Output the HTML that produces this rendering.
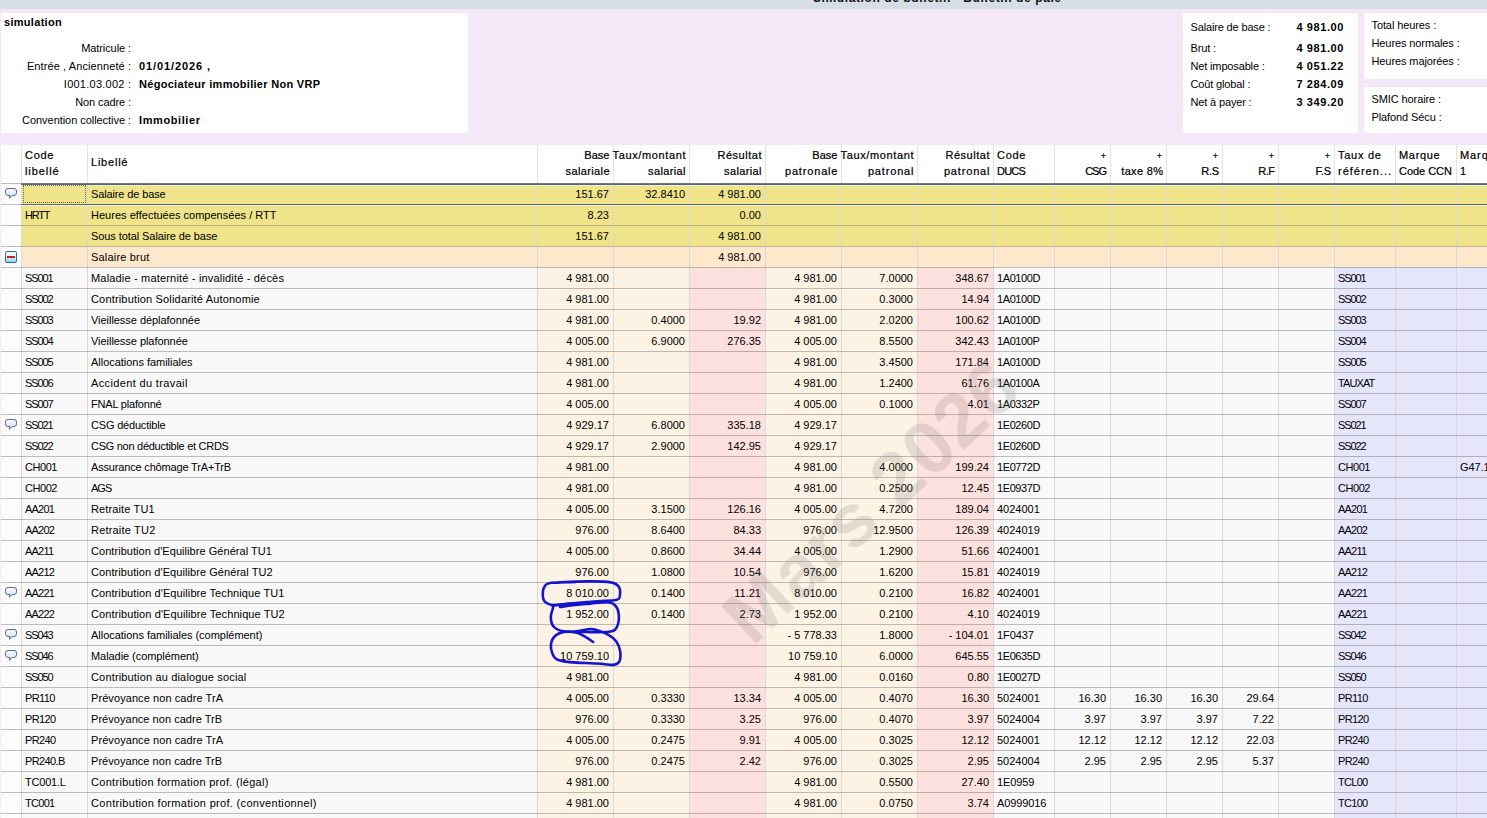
<!DOCTYPE html>
<html><head><meta charset="utf-8"><title>Simulation de bulletin</title>
<style>
html,body{margin:0;padding:0;}
body{width:1487px;height:818px;overflow:hidden;position:relative;background:#f3e7f8;font-family:"Liberation Sans",sans-serif;font-size:11px;color:#000;}
div{position:absolute;box-sizing:border-box;}
.t{white-space:nowrap;line-height:13px;height:13px;}
.r{text-align:right;}
.b{font-weight:bold;}
.bg{}
.tb{letter-spacing:0.15px;}
.hd{font-size:11px;color:#000;letter-spacing:0.5px;-webkit-text-stroke:0.22px #000;}
.cd{letter-spacing:-0.6px;}
</style></head><body>

<div style="left:0;top:0;width:1487px;height:9px;background:#d5dee4;overflow:hidden"><div class="t b" style="left:813px;top:-8px;font-size:12px;letter-spacing:0.6px;color:#111">Simulation de bulletin - Bulletin de paie</div></div>
<div style="left:1px;top:13px;width:467px;height:120px;background:#fff"></div>
<div class="t b" style="left:4.0px;top:15.7px;font-size:11px;letter-spacing:0.3px">simulation</div>
<div class="t  r" style="right:1356.1px;top:41.7px;letter-spacing:-0.10px">Matricule :</div>
<div class="t  r" style="right:1355.9px;top:59.7px;letter-spacing:0.10px">Entrée , Ancienneté :</div>
<div class="t b" style="left:139.0px;top:59.7px;letter-spacing:0.9px">01/01/2026 ,</div>
<div class="t  r" style="right:1355.8px;top:77.7px;letter-spacing:0.24px">I001.03.002 :</div>
<div class="t b" style="left:139.0px;top:77.7px;letter-spacing:0.3px">Négociateur immobilier Non VRP</div>
<div class="t  r" style="right:1356.1px;top:95.7px;letter-spacing:-0.10px">Non cadre :</div>
<div class="t  r" style="right:1356.0px;top:113.7px;letter-spacing:-0.05px">Convention collective :</div>
<div class="t b" style="left:139.0px;top:113.7px;letter-spacing:0.6px">Immobilier</div>
<div style="left:1183px;top:13px;width:175px;height:120px;background:#fff"></div>
<div class="t " style="left:1190.5px;top:20.7px;letter-spacing:-0.15px">Salaire de base :</div>
<div class="t b r" style="right:143.0px;top:20.7px;letter-spacing:0.6px">4 981.00</div>
<div class="t " style="left:1190.5px;top:41.7px;letter-spacing:-0.15px">Brut :</div>
<div class="t b r" style="right:143.0px;top:41.7px;letter-spacing:0.6px">4 981.00</div>
<div class="t " style="left:1190.5px;top:59.7px;letter-spacing:-0.15px">Net imposable :</div>
<div class="t b r" style="right:143.0px;top:59.7px;letter-spacing:0.6px">4 051.22</div>
<div class="t " style="left:1190.5px;top:77.7px;letter-spacing:-0.15px">Coût global :</div>
<div class="t b r" style="right:143.0px;top:77.7px;letter-spacing:0.6px">7 284.09</div>
<div class="t " style="left:1190.5px;top:95.7px;letter-spacing:-0.15px">Net à payer :</div>
<div class="t b r" style="right:143.0px;top:95.7px;letter-spacing:0.6px">3 349.20</div>
<div style="left:1364px;top:13px;width:123px;height:66px;background:#fff"></div>
<div style="left:1364px;top:87px;width:123px;height:46px;background:#fff"></div>
<div class="t " style="left:1371.5px;top:18.7px;letter-spacing:-0.1px">Total heures :</div>
<div class="t " style="left:1371.5px;top:36.7px;letter-spacing:-0.1px">Heures normales :</div>
<div class="t " style="left:1371.5px;top:54.7px;letter-spacing:-0.1px">Heures majorées :</div>
<div class="t " style="left:1371.5px;top:92.7px;letter-spacing:-0.1px">SMIC horaire :</div>
<div class="t " style="left:1371.5px;top:110.7px;letter-spacing:-0.1px">Plafond Sécu :</div>
<div style="left:1px;top:145px;width:1486px;height:38px;background:#fff"></div>
<div style="left:21px;top:145px;width:1px;height:38px;background:#e3e3e3"></div>
<div style="left:87px;top:145px;width:1px;height:38px;background:#e3e3e3"></div>
<div style="left:537px;top:145px;width:1px;height:38px;background:#e3e3e3"></div>
<div style="left:613px;top:145px;width:1px;height:38px;background:#e3e3e3"></div>
<div style="left:689px;top:145px;width:1px;height:38px;background:#e3e3e3"></div>
<div style="left:765px;top:145px;width:1px;height:38px;background:#e3e3e3"></div>
<div style="left:841px;top:145px;width:1px;height:38px;background:#e3e3e3"></div>
<div style="left:917px;top:145px;width:1px;height:38px;background:#e3e3e3"></div>
<div style="left:993px;top:145px;width:1px;height:38px;background:#e3e3e3"></div>
<div style="left:1054px;top:145px;width:1px;height:38px;background:#e3e3e3"></div>
<div style="left:1110px;top:145px;width:1px;height:38px;background:#e3e3e3"></div>
<div style="left:1166px;top:145px;width:1px;height:38px;background:#e3e3e3"></div>
<div style="left:1222px;top:145px;width:1px;height:38px;background:#e3e3e3"></div>
<div style="left:1278px;top:145px;width:1px;height:38px;background:#e3e3e3"></div>
<div style="left:1334px;top:145px;width:1px;height:38px;background:#e3e3e3"></div>
<div style="left:1395px;top:145px;width:1px;height:38px;background:#e3e3e3"></div>
<div style="left:1456px;top:145px;width:1px;height:38px;background:#e3e3e3"></div>
<div class="t hd" style="left:25.0px;top:148.7px;letter-spacing:0.73px">Code</div>
<div class="t hd" style="left:25.0px;top:164.7px;letter-spacing:0.93px">libellé</div>
<div class="t hd" style="left:91.0px;top:155.7px;letter-spacing:0.78px">Libellé</div>
<div class="t hd r" style="right:877.5px;top:148.7px;letter-spacing:0.04px">Base</div>
<div class="t hd r" style="right:877.1px;top:164.7px;letter-spacing:0.38px">salariale</div>
<div class="t hd r" style="right:800.9px;top:148.7px;letter-spacing:0.63px">Taux/montant</div>
<div class="t hd r" style="right:801.1px;top:164.7px;letter-spacing:0.38px">salarial</div>
<div class="t hd r" style="right:725.0px;top:148.7px;letter-spacing:0.52px">Résultat</div>
<div class="t hd r" style="right:725.1px;top:164.7px;letter-spacing:0.38px">salarial</div>
<div class="t hd r" style="right:649.5px;top:148.7px;letter-spacing:0.04px">Base</div>
<div class="t hd r" style="right:648.7px;top:164.7px;letter-spacing:0.83px">patronale</div>
<div class="t hd r" style="right:572.9px;top:148.7px;letter-spacing:0.63px">Taux/montant</div>
<div class="t hd r" style="right:572.7px;top:164.7px;letter-spacing:0.83px">patronal</div>
<div class="t hd r" style="right:497.0px;top:148.7px;letter-spacing:0.52px">Résultat</div>
<div class="t hd r" style="right:496.7px;top:164.7px;letter-spacing:0.83px">patronal</div>
<div class="t hd" style="left:997.0px;top:148.7px;letter-spacing:0.73px">Code</div>
<div class="t hd" style="left:997.0px;top:164.7px;letter-spacing:-0.80px">DUCS</div>
<div class="t hd r" style="right:381.0px;top:150.2px;font-size:9px;letter-spacing:0">+</div>
<div class="t hd r" style="right:381.0px;top:164.7px;letter-spacing:-1.00px">CSG</div>
<div class="t hd r" style="right:325.0px;top:150.2px;font-size:9px;letter-spacing:0">+</div>
<div class="t hd r" style="right:323.7px;top:164.7px;letter-spacing:0.33px">taxe 8%</div>
<div class="t hd r" style="right:269.0px;top:150.2px;font-size:9px;letter-spacing:0">+</div>
<div class="t hd r" style="right:268.3px;top:164.7px;letter-spacing:-0.32px">R.S</div>
<div class="t hd r" style="right:213.0px;top:150.2px;font-size:9px;letter-spacing:0">+</div>
<div class="t hd r" style="right:212.5px;top:164.7px;letter-spacing:-0.50px">R.F</div>
<div class="t hd r" style="right:157.0px;top:150.2px;font-size:9px;letter-spacing:0">+</div>
<div class="t hd r" style="right:156.2px;top:164.7px;letter-spacing:-0.20px">F.S</div>
<div class="t hd" style="left:1338.0px;top:148.7px;letter-spacing:0.74px">Taux de</div>
<div class="t hd" style="left:1338.0px;top:164.7px;letter-spacing:1.00px">référen...</div>
<div class="t hd" style="left:1399.0px;top:148.7px;letter-spacing:0.68px">Marque</div>
<div class="t hd" style="left:1399.0px;top:164.7px;letter-spacing:-0.04px">Code CCN</div>
<div class="t hd" style="left:1460.0px;top:148.7px;letter-spacing:0.90px">Marq</div>
<div class="t hd" style="left:1460.0px;top:164.7px;letter-spacing:0.00px">1</div>
<div style="left:1px;top:183px;width:20px;height:21px;background:#fcfcfc"></div>
<div style="left:21px;top:183px;width:66px;height:21px;background:#efe48a"></div>
<div style="left:87px;top:183px;width:450px;height:21px;background:#efe48a"></div>
<div style="left:537px;top:183px;width:76px;height:21px;background:#efe48a"></div>
<div style="left:613px;top:183px;width:76px;height:21px;background:#efe48a"></div>
<div style="left:689px;top:183px;width:76px;height:21px;background:#efe48a"></div>
<div style="left:765px;top:183px;width:76px;height:21px;background:#efe48a"></div>
<div style="left:841px;top:183px;width:76px;height:21px;background:#efe48a"></div>
<div style="left:917px;top:183px;width:76px;height:21px;background:#efe48a"></div>
<div style="left:993px;top:183px;width:61px;height:21px;background:#efe48a"></div>
<div style="left:1054px;top:183px;width:56px;height:21px;background:#efe48a"></div>
<div style="left:1110px;top:183px;width:56px;height:21px;background:#efe48a"></div>
<div style="left:1166px;top:183px;width:56px;height:21px;background:#efe48a"></div>
<div style="left:1222px;top:183px;width:56px;height:21px;background:#efe48a"></div>
<div style="left:1278px;top:183px;width:56px;height:21px;background:#efe48a"></div>
<div style="left:1334px;top:183px;width:61px;height:21px;background:#efe48a"></div>
<div style="left:1395px;top:183px;width:61px;height:21px;background:#efe48a"></div>
<div style="left:1456px;top:183px;width:61px;height:21px;background:#efe48a"></div>
<div class="t " style="left:91.0px;top:188.4px;letter-spacing:-0.13px">Salaire de base</div>
<div class="t  r" style="right:878.0px;top:188.4px;">151.67</div>
<div class="t  r" style="right:802.0px;top:188.4px;">32.8410</div>
<div class="t  r" style="right:726.0px;top:188.4px;">4 981.00</div>
<div style="left:1px;top:204px;width:20px;height:21px;background:#fcfcfc"></div>
<div style="left:21px;top:204px;width:66px;height:21px;background:#efe48a"></div>
<div style="left:87px;top:204px;width:450px;height:21px;background:#efe48a"></div>
<div style="left:537px;top:204px;width:76px;height:21px;background:#efe48a"></div>
<div style="left:613px;top:204px;width:76px;height:21px;background:#efe48a"></div>
<div style="left:689px;top:204px;width:76px;height:21px;background:#efe48a"></div>
<div style="left:765px;top:204px;width:76px;height:21px;background:#efe48a"></div>
<div style="left:841px;top:204px;width:76px;height:21px;background:#efe48a"></div>
<div style="left:917px;top:204px;width:76px;height:21px;background:#efe48a"></div>
<div style="left:993px;top:204px;width:61px;height:21px;background:#efe48a"></div>
<div style="left:1054px;top:204px;width:56px;height:21px;background:#efe48a"></div>
<div style="left:1110px;top:204px;width:56px;height:21px;background:#efe48a"></div>
<div style="left:1166px;top:204px;width:56px;height:21px;background:#efe48a"></div>
<div style="left:1222px;top:204px;width:56px;height:21px;background:#efe48a"></div>
<div style="left:1278px;top:204px;width:56px;height:21px;background:#efe48a"></div>
<div style="left:1334px;top:204px;width:61px;height:21px;background:#efe48a"></div>
<div style="left:1395px;top:204px;width:61px;height:21px;background:#efe48a"></div>
<div style="left:1456px;top:204px;width:61px;height:21px;background:#efe48a"></div>
<div class="t " style="left:25.0px;top:209.4px;letter-spacing:-1.20px">HRTT</div>
<div class="t " style="left:91.0px;top:209.4px;letter-spacing:0.02px">Heures effectuées compensées / RTT</div>
<div class="t  r" style="right:878.0px;top:209.4px;">8.23</div>
<div class="t  r" style="right:726.0px;top:209.4px;">0.00</div>
<div style="left:1px;top:225px;width:20px;height:21px;background:#fcfcfc"></div>
<div style="left:21px;top:225px;width:66px;height:21px;background:#efe48a"></div>
<div style="left:87px;top:225px;width:450px;height:21px;background:#efe48a"></div>
<div style="left:537px;top:225px;width:76px;height:21px;background:#efe48a"></div>
<div style="left:613px;top:225px;width:76px;height:21px;background:#efe48a"></div>
<div style="left:689px;top:225px;width:76px;height:21px;background:#efe48a"></div>
<div style="left:765px;top:225px;width:76px;height:21px;background:#efe48a"></div>
<div style="left:841px;top:225px;width:76px;height:21px;background:#efe48a"></div>
<div style="left:917px;top:225px;width:76px;height:21px;background:#efe48a"></div>
<div style="left:993px;top:225px;width:61px;height:21px;background:#efe48a"></div>
<div style="left:1054px;top:225px;width:56px;height:21px;background:#efe48a"></div>
<div style="left:1110px;top:225px;width:56px;height:21px;background:#efe48a"></div>
<div style="left:1166px;top:225px;width:56px;height:21px;background:#efe48a"></div>
<div style="left:1222px;top:225px;width:56px;height:21px;background:#efe48a"></div>
<div style="left:1278px;top:225px;width:56px;height:21px;background:#efe48a"></div>
<div style="left:1334px;top:225px;width:61px;height:21px;background:#efe48a"></div>
<div style="left:1395px;top:225px;width:61px;height:21px;background:#efe48a"></div>
<div style="left:1456px;top:225px;width:61px;height:21px;background:#efe48a"></div>
<div class="t " style="left:91.0px;top:230.4px;letter-spacing:-0.08px">Sous total Salaire de base</div>
<div class="t  r" style="right:878.0px;top:230.4px;">151.67</div>
<div class="t  r" style="right:726.0px;top:230.4px;">4 981.00</div>
<div style="left:1px;top:246px;width:20px;height:21px;background:#fcfcfc"></div>
<div style="left:21px;top:246px;width:66px;height:21px;background:#fde8cc"></div>
<div style="left:87px;top:246px;width:450px;height:21px;background:#fde8cc"></div>
<div style="left:537px;top:246px;width:76px;height:21px;background:#fde8cc"></div>
<div style="left:613px;top:246px;width:76px;height:21px;background:#fde8cc"></div>
<div style="left:689px;top:246px;width:76px;height:21px;background:#fde8cc"></div>
<div style="left:765px;top:246px;width:76px;height:21px;background:#fde8cc"></div>
<div style="left:841px;top:246px;width:76px;height:21px;background:#fde8cc"></div>
<div style="left:917px;top:246px;width:76px;height:21px;background:#fde8cc"></div>
<div style="left:993px;top:246px;width:61px;height:21px;background:#fde8cc"></div>
<div style="left:1054px;top:246px;width:56px;height:21px;background:#fde8cc"></div>
<div style="left:1110px;top:246px;width:56px;height:21px;background:#fde8cc"></div>
<div style="left:1166px;top:246px;width:56px;height:21px;background:#fde8cc"></div>
<div style="left:1222px;top:246px;width:56px;height:21px;background:#fde8cc"></div>
<div style="left:1278px;top:246px;width:56px;height:21px;background:#fde8cc"></div>
<div style="left:1334px;top:246px;width:61px;height:21px;background:#fde8cc"></div>
<div style="left:1395px;top:246px;width:61px;height:21px;background:#fde8cc"></div>
<div style="left:1456px;top:246px;width:61px;height:21px;background:#fde8cc"></div>
<div class="t " style="left:91.0px;top:251.4px;letter-spacing:0.19px">Salaire brut</div>
<div class="t  r" style="right:726.0px;top:251.4px;">4 981.00</div>
<div style="left:1px;top:267px;width:20px;height:21px;background:#fcfcfc"></div>
<div style="left:21px;top:267px;width:66px;height:21px;background:#f8f8f8"></div>
<div style="left:87px;top:267px;width:450px;height:21px;background:#f8f8f8"></div>
<div style="left:537px;top:267px;width:76px;height:21px;background:#fdf3e4"></div>
<div style="left:613px;top:267px;width:76px;height:21px;background:#fdf3e4"></div>
<div style="left:689px;top:267px;width:76px;height:21px;background:#fde1df"></div>
<div style="left:765px;top:267px;width:76px;height:21px;background:#fdf3e4"></div>
<div style="left:841px;top:267px;width:76px;height:21px;background:#fdf3e4"></div>
<div style="left:917px;top:267px;width:76px;height:21px;background:#fde1df"></div>
<div style="left:993px;top:267px;width:61px;height:21px;background:#f8f8f8"></div>
<div style="left:1054px;top:267px;width:56px;height:21px;background:#f8f8f8"></div>
<div style="left:1110px;top:267px;width:56px;height:21px;background:#f8f8f8"></div>
<div style="left:1166px;top:267px;width:56px;height:21px;background:#f8f8f8"></div>
<div style="left:1222px;top:267px;width:56px;height:21px;background:#f8f8f8"></div>
<div style="left:1278px;top:267px;width:56px;height:21px;background:#f8f8f8"></div>
<div style="left:1334px;top:267px;width:61px;height:21px;background:#e6e6fa"></div>
<div style="left:1395px;top:267px;width:61px;height:21px;background:#e6e6fa"></div>
<div style="left:1456px;top:267px;width:61px;height:21px;background:#e6e6fa"></div>
<div class="t " style="left:25.0px;top:272.4px;letter-spacing:-1.10px">SS001</div>
<div class="t " style="left:91.0px;top:272.4px;letter-spacing:0.18px">Maladie - maternité - invalidité - décès</div>
<div class="t  r" style="right:878.0px;top:272.4px;">4 981.00</div>
<div class="t  r" style="right:650.0px;top:272.4px;">4 981.00</div>
<div class="t  r" style="right:574.0px;top:272.4px;">7.0000</div>
<div class="t  r" style="right:498.0px;top:272.4px;">348.67</div>
<div class="t " style="left:997.0px;top:272.4px;letter-spacing:-0.40px">1A0100D</div>
<div class="t " style="left:1338.0px;top:272.4px;letter-spacing:-1.10px">SS001</div>
<div style="left:1px;top:288px;width:20px;height:21px;background:#fcfcfc"></div>
<div style="left:21px;top:288px;width:66px;height:21px;background:#f8f8f8"></div>
<div style="left:87px;top:288px;width:450px;height:21px;background:#f8f8f8"></div>
<div style="left:537px;top:288px;width:76px;height:21px;background:#fdf3e4"></div>
<div style="left:613px;top:288px;width:76px;height:21px;background:#fdf3e4"></div>
<div style="left:689px;top:288px;width:76px;height:21px;background:#fde1df"></div>
<div style="left:765px;top:288px;width:76px;height:21px;background:#fdf3e4"></div>
<div style="left:841px;top:288px;width:76px;height:21px;background:#fdf3e4"></div>
<div style="left:917px;top:288px;width:76px;height:21px;background:#fde1df"></div>
<div style="left:993px;top:288px;width:61px;height:21px;background:#f8f8f8"></div>
<div style="left:1054px;top:288px;width:56px;height:21px;background:#f8f8f8"></div>
<div style="left:1110px;top:288px;width:56px;height:21px;background:#f8f8f8"></div>
<div style="left:1166px;top:288px;width:56px;height:21px;background:#f8f8f8"></div>
<div style="left:1222px;top:288px;width:56px;height:21px;background:#f8f8f8"></div>
<div style="left:1278px;top:288px;width:56px;height:21px;background:#f8f8f8"></div>
<div style="left:1334px;top:288px;width:61px;height:21px;background:#e6e6fa"></div>
<div style="left:1395px;top:288px;width:61px;height:21px;background:#e6e6fa"></div>
<div style="left:1456px;top:288px;width:61px;height:21px;background:#e6e6fa"></div>
<div class="t " style="left:25.0px;top:293.4px;letter-spacing:-1.10px">SS002</div>
<div class="t " style="left:91.0px;top:293.4px;letter-spacing:0.17px">Contribution Solidarité Autonomie</div>
<div class="t  r" style="right:878.0px;top:293.4px;">4 981.00</div>
<div class="t  r" style="right:650.0px;top:293.4px;">4 981.00</div>
<div class="t  r" style="right:574.0px;top:293.4px;">0.3000</div>
<div class="t  r" style="right:498.0px;top:293.4px;">14.94</div>
<div class="t " style="left:997.0px;top:293.4px;letter-spacing:-0.40px">1A0100D</div>
<div class="t " style="left:1338.0px;top:293.4px;letter-spacing:-1.10px">SS002</div>
<div style="left:1px;top:309px;width:20px;height:21px;background:#fcfcfc"></div>
<div style="left:21px;top:309px;width:66px;height:21px;background:#f8f8f8"></div>
<div style="left:87px;top:309px;width:450px;height:21px;background:#f8f8f8"></div>
<div style="left:537px;top:309px;width:76px;height:21px;background:#fdf3e4"></div>
<div style="left:613px;top:309px;width:76px;height:21px;background:#fdf3e4"></div>
<div style="left:689px;top:309px;width:76px;height:21px;background:#fde1df"></div>
<div style="left:765px;top:309px;width:76px;height:21px;background:#fdf3e4"></div>
<div style="left:841px;top:309px;width:76px;height:21px;background:#fdf3e4"></div>
<div style="left:917px;top:309px;width:76px;height:21px;background:#fde1df"></div>
<div style="left:993px;top:309px;width:61px;height:21px;background:#f8f8f8"></div>
<div style="left:1054px;top:309px;width:56px;height:21px;background:#f8f8f8"></div>
<div style="left:1110px;top:309px;width:56px;height:21px;background:#f8f8f8"></div>
<div style="left:1166px;top:309px;width:56px;height:21px;background:#f8f8f8"></div>
<div style="left:1222px;top:309px;width:56px;height:21px;background:#f8f8f8"></div>
<div style="left:1278px;top:309px;width:56px;height:21px;background:#f8f8f8"></div>
<div style="left:1334px;top:309px;width:61px;height:21px;background:#e6e6fa"></div>
<div style="left:1395px;top:309px;width:61px;height:21px;background:#e6e6fa"></div>
<div style="left:1456px;top:309px;width:61px;height:21px;background:#e6e6fa"></div>
<div class="t " style="left:25.0px;top:314.4px;letter-spacing:-1.10px">SS003</div>
<div class="t " style="left:91.0px;top:314.4px;letter-spacing:-0.04px">Vieillesse déplafonnée</div>
<div class="t  r" style="right:878.0px;top:314.4px;">4 981.00</div>
<div class="t  r" style="right:802.0px;top:314.4px;">0.4000</div>
<div class="t  r" style="right:726.0px;top:314.4px;">19.92</div>
<div class="t  r" style="right:650.0px;top:314.4px;">4 981.00</div>
<div class="t  r" style="right:574.0px;top:314.4px;">2.0200</div>
<div class="t  r" style="right:498.0px;top:314.4px;">100.62</div>
<div class="t " style="left:997.0px;top:314.4px;letter-spacing:-0.40px">1A0100D</div>
<div class="t " style="left:1338.0px;top:314.4px;letter-spacing:-1.10px">SS003</div>
<div style="left:1px;top:330px;width:20px;height:21px;background:#fcfcfc"></div>
<div style="left:21px;top:330px;width:66px;height:21px;background:#f8f8f8"></div>
<div style="left:87px;top:330px;width:450px;height:21px;background:#f8f8f8"></div>
<div style="left:537px;top:330px;width:76px;height:21px;background:#fdf3e4"></div>
<div style="left:613px;top:330px;width:76px;height:21px;background:#fdf3e4"></div>
<div style="left:689px;top:330px;width:76px;height:21px;background:#fde1df"></div>
<div style="left:765px;top:330px;width:76px;height:21px;background:#fdf3e4"></div>
<div style="left:841px;top:330px;width:76px;height:21px;background:#fdf3e4"></div>
<div style="left:917px;top:330px;width:76px;height:21px;background:#fde1df"></div>
<div style="left:993px;top:330px;width:61px;height:21px;background:#f8f8f8"></div>
<div style="left:1054px;top:330px;width:56px;height:21px;background:#f8f8f8"></div>
<div style="left:1110px;top:330px;width:56px;height:21px;background:#f8f8f8"></div>
<div style="left:1166px;top:330px;width:56px;height:21px;background:#f8f8f8"></div>
<div style="left:1222px;top:330px;width:56px;height:21px;background:#f8f8f8"></div>
<div style="left:1278px;top:330px;width:56px;height:21px;background:#f8f8f8"></div>
<div style="left:1334px;top:330px;width:61px;height:21px;background:#e6e6fa"></div>
<div style="left:1395px;top:330px;width:61px;height:21px;background:#e6e6fa"></div>
<div style="left:1456px;top:330px;width:61px;height:21px;background:#e6e6fa"></div>
<div class="t " style="left:25.0px;top:335.4px;letter-spacing:-1.10px">SS004</div>
<div class="t " style="left:91.0px;top:335.4px;letter-spacing:-0.04px">Vieillesse plafonnée</div>
<div class="t  r" style="right:878.0px;top:335.4px;">4 005.00</div>
<div class="t  r" style="right:802.0px;top:335.4px;">6.9000</div>
<div class="t  r" style="right:726.0px;top:335.4px;">276.35</div>
<div class="t  r" style="right:650.0px;top:335.4px;">4 005.00</div>
<div class="t  r" style="right:574.0px;top:335.4px;">8.5500</div>
<div class="t  r" style="right:498.0px;top:335.4px;">342.43</div>
<div class="t " style="left:997.0px;top:335.4px;letter-spacing:-0.40px">1A0100P</div>
<div class="t " style="left:1338.0px;top:335.4px;letter-spacing:-1.10px">SS004</div>
<div style="left:1px;top:351px;width:20px;height:21px;background:#fcfcfc"></div>
<div style="left:21px;top:351px;width:66px;height:21px;background:#f8f8f8"></div>
<div style="left:87px;top:351px;width:450px;height:21px;background:#f8f8f8"></div>
<div style="left:537px;top:351px;width:76px;height:21px;background:#fdf3e4"></div>
<div style="left:613px;top:351px;width:76px;height:21px;background:#fdf3e4"></div>
<div style="left:689px;top:351px;width:76px;height:21px;background:#fde1df"></div>
<div style="left:765px;top:351px;width:76px;height:21px;background:#fdf3e4"></div>
<div style="left:841px;top:351px;width:76px;height:21px;background:#fdf3e4"></div>
<div style="left:917px;top:351px;width:76px;height:21px;background:#fde1df"></div>
<div style="left:993px;top:351px;width:61px;height:21px;background:#f8f8f8"></div>
<div style="left:1054px;top:351px;width:56px;height:21px;background:#f8f8f8"></div>
<div style="left:1110px;top:351px;width:56px;height:21px;background:#f8f8f8"></div>
<div style="left:1166px;top:351px;width:56px;height:21px;background:#f8f8f8"></div>
<div style="left:1222px;top:351px;width:56px;height:21px;background:#f8f8f8"></div>
<div style="left:1278px;top:351px;width:56px;height:21px;background:#f8f8f8"></div>
<div style="left:1334px;top:351px;width:61px;height:21px;background:#e6e6fa"></div>
<div style="left:1395px;top:351px;width:61px;height:21px;background:#e6e6fa"></div>
<div style="left:1456px;top:351px;width:61px;height:21px;background:#e6e6fa"></div>
<div class="t " style="left:25.0px;top:356.4px;letter-spacing:-1.10px">SS005</div>
<div class="t " style="left:91.0px;top:356.4px;letter-spacing:-0.03px">Allocations familiales</div>
<div class="t  r" style="right:878.0px;top:356.4px;">4 981.00</div>
<div class="t  r" style="right:650.0px;top:356.4px;">4 981.00</div>
<div class="t  r" style="right:574.0px;top:356.4px;">3.4500</div>
<div class="t  r" style="right:498.0px;top:356.4px;">171.84</div>
<div class="t " style="left:997.0px;top:356.4px;letter-spacing:-0.40px">1A0100D</div>
<div class="t " style="left:1338.0px;top:356.4px;letter-spacing:-1.10px">SS005</div>
<div style="left:1px;top:372px;width:20px;height:21px;background:#fcfcfc"></div>
<div style="left:21px;top:372px;width:66px;height:21px;background:#f8f8f8"></div>
<div style="left:87px;top:372px;width:450px;height:21px;background:#f8f8f8"></div>
<div style="left:537px;top:372px;width:76px;height:21px;background:#fdf3e4"></div>
<div style="left:613px;top:372px;width:76px;height:21px;background:#fdf3e4"></div>
<div style="left:689px;top:372px;width:76px;height:21px;background:#fde1df"></div>
<div style="left:765px;top:372px;width:76px;height:21px;background:#fdf3e4"></div>
<div style="left:841px;top:372px;width:76px;height:21px;background:#fdf3e4"></div>
<div style="left:917px;top:372px;width:76px;height:21px;background:#fde1df"></div>
<div style="left:993px;top:372px;width:61px;height:21px;background:#f8f8f8"></div>
<div style="left:1054px;top:372px;width:56px;height:21px;background:#f8f8f8"></div>
<div style="left:1110px;top:372px;width:56px;height:21px;background:#f8f8f8"></div>
<div style="left:1166px;top:372px;width:56px;height:21px;background:#f8f8f8"></div>
<div style="left:1222px;top:372px;width:56px;height:21px;background:#f8f8f8"></div>
<div style="left:1278px;top:372px;width:56px;height:21px;background:#f8f8f8"></div>
<div style="left:1334px;top:372px;width:61px;height:21px;background:#e6e6fa"></div>
<div style="left:1395px;top:372px;width:61px;height:21px;background:#e6e6fa"></div>
<div style="left:1456px;top:372px;width:61px;height:21px;background:#e6e6fa"></div>
<div class="t " style="left:25.0px;top:377.4px;letter-spacing:-1.10px">SS006</div>
<div class="t " style="left:91.0px;top:377.4px;letter-spacing:0.36px">Accident du travail</div>
<div class="t  r" style="right:878.0px;top:377.4px;">4 981.00</div>
<div class="t  r" style="right:650.0px;top:377.4px;">4 981.00</div>
<div class="t  r" style="right:574.0px;top:377.4px;">1.2400</div>
<div class="t  r" style="right:498.0px;top:377.4px;">61.76</div>
<div class="t " style="left:997.0px;top:377.4px;letter-spacing:-0.40px">1A0100A</div>
<div class="t " style="left:1338.0px;top:377.4px;letter-spacing:-0.90px">TAUXAT</div>
<div style="left:1px;top:393px;width:20px;height:21px;background:#fcfcfc"></div>
<div style="left:21px;top:393px;width:66px;height:21px;background:#f8f8f8"></div>
<div style="left:87px;top:393px;width:450px;height:21px;background:#f8f8f8"></div>
<div style="left:537px;top:393px;width:76px;height:21px;background:#fdf3e4"></div>
<div style="left:613px;top:393px;width:76px;height:21px;background:#fdf3e4"></div>
<div style="left:689px;top:393px;width:76px;height:21px;background:#fde1df"></div>
<div style="left:765px;top:393px;width:76px;height:21px;background:#fdf3e4"></div>
<div style="left:841px;top:393px;width:76px;height:21px;background:#fdf3e4"></div>
<div style="left:917px;top:393px;width:76px;height:21px;background:#fde1df"></div>
<div style="left:993px;top:393px;width:61px;height:21px;background:#f8f8f8"></div>
<div style="left:1054px;top:393px;width:56px;height:21px;background:#f8f8f8"></div>
<div style="left:1110px;top:393px;width:56px;height:21px;background:#f8f8f8"></div>
<div style="left:1166px;top:393px;width:56px;height:21px;background:#f8f8f8"></div>
<div style="left:1222px;top:393px;width:56px;height:21px;background:#f8f8f8"></div>
<div style="left:1278px;top:393px;width:56px;height:21px;background:#f8f8f8"></div>
<div style="left:1334px;top:393px;width:61px;height:21px;background:#e6e6fa"></div>
<div style="left:1395px;top:393px;width:61px;height:21px;background:#e6e6fa"></div>
<div style="left:1456px;top:393px;width:61px;height:21px;background:#e6e6fa"></div>
<div class="t " style="left:25.0px;top:398.4px;letter-spacing:-1.10px">SS007</div>
<div class="t " style="left:91.0px;top:398.4px;letter-spacing:-0.19px">FNAL plafonné</div>
<div class="t  r" style="right:878.0px;top:398.4px;">4 005.00</div>
<div class="t  r" style="right:650.0px;top:398.4px;">4 005.00</div>
<div class="t  r" style="right:574.0px;top:398.4px;">0.1000</div>
<div class="t  r" style="right:498.0px;top:398.4px;">4.01</div>
<div class="t " style="left:997.0px;top:398.4px;letter-spacing:-0.40px">1A0332P</div>
<div class="t " style="left:1338.0px;top:398.4px;letter-spacing:-1.10px">SS007</div>
<div style="left:1px;top:414px;width:20px;height:21px;background:#fcfcfc"></div>
<div style="left:21px;top:414px;width:66px;height:21px;background:#f8f8f8"></div>
<div style="left:87px;top:414px;width:450px;height:21px;background:#f8f8f8"></div>
<div style="left:537px;top:414px;width:76px;height:21px;background:#fdf3e4"></div>
<div style="left:613px;top:414px;width:76px;height:21px;background:#fdf3e4"></div>
<div style="left:689px;top:414px;width:76px;height:21px;background:#fde1df"></div>
<div style="left:765px;top:414px;width:76px;height:21px;background:#fdf3e4"></div>
<div style="left:841px;top:414px;width:76px;height:21px;background:#fdf3e4"></div>
<div style="left:917px;top:414px;width:76px;height:21px;background:#fde1df"></div>
<div style="left:993px;top:414px;width:61px;height:21px;background:#f8f8f8"></div>
<div style="left:1054px;top:414px;width:56px;height:21px;background:#f8f8f8"></div>
<div style="left:1110px;top:414px;width:56px;height:21px;background:#f8f8f8"></div>
<div style="left:1166px;top:414px;width:56px;height:21px;background:#f8f8f8"></div>
<div style="left:1222px;top:414px;width:56px;height:21px;background:#f8f8f8"></div>
<div style="left:1278px;top:414px;width:56px;height:21px;background:#f8f8f8"></div>
<div style="left:1334px;top:414px;width:61px;height:21px;background:#e6e6fa"></div>
<div style="left:1395px;top:414px;width:61px;height:21px;background:#e6e6fa"></div>
<div style="left:1456px;top:414px;width:61px;height:21px;background:#e6e6fa"></div>
<div class="t " style="left:25.0px;top:419.4px;letter-spacing:-1.10px">SS021</div>
<div class="t " style="left:91.0px;top:419.4px;letter-spacing:-0.19px">CSG déductible</div>
<div class="t  r" style="right:878.0px;top:419.4px;">4 929.17</div>
<div class="t  r" style="right:802.0px;top:419.4px;">6.8000</div>
<div class="t  r" style="right:726.0px;top:419.4px;">335.18</div>
<div class="t  r" style="right:650.0px;top:419.4px;">4 929.17</div>
<div class="t " style="left:997.0px;top:419.4px;letter-spacing:-0.40px">1E0260D</div>
<div class="t " style="left:1338.0px;top:419.4px;letter-spacing:-1.10px">SS021</div>
<div style="left:1px;top:435px;width:20px;height:21px;background:#fcfcfc"></div>
<div style="left:21px;top:435px;width:66px;height:21px;background:#f8f8f8"></div>
<div style="left:87px;top:435px;width:450px;height:21px;background:#f8f8f8"></div>
<div style="left:537px;top:435px;width:76px;height:21px;background:#fdf3e4"></div>
<div style="left:613px;top:435px;width:76px;height:21px;background:#fdf3e4"></div>
<div style="left:689px;top:435px;width:76px;height:21px;background:#fde1df"></div>
<div style="left:765px;top:435px;width:76px;height:21px;background:#fdf3e4"></div>
<div style="left:841px;top:435px;width:76px;height:21px;background:#fdf3e4"></div>
<div style="left:917px;top:435px;width:76px;height:21px;background:#fde1df"></div>
<div style="left:993px;top:435px;width:61px;height:21px;background:#f8f8f8"></div>
<div style="left:1054px;top:435px;width:56px;height:21px;background:#f8f8f8"></div>
<div style="left:1110px;top:435px;width:56px;height:21px;background:#f8f8f8"></div>
<div style="left:1166px;top:435px;width:56px;height:21px;background:#f8f8f8"></div>
<div style="left:1222px;top:435px;width:56px;height:21px;background:#f8f8f8"></div>
<div style="left:1278px;top:435px;width:56px;height:21px;background:#f8f8f8"></div>
<div style="left:1334px;top:435px;width:61px;height:21px;background:#e6e6fa"></div>
<div style="left:1395px;top:435px;width:61px;height:21px;background:#e6e6fa"></div>
<div style="left:1456px;top:435px;width:61px;height:21px;background:#e6e6fa"></div>
<div class="t " style="left:25.0px;top:440.4px;letter-spacing:-1.10px">SS022</div>
<div class="t " style="left:91.0px;top:440.4px;letter-spacing:-0.28px">CSG non déductible et CRDS</div>
<div class="t  r" style="right:878.0px;top:440.4px;">4 929.17</div>
<div class="t  r" style="right:802.0px;top:440.4px;">2.9000</div>
<div class="t  r" style="right:726.0px;top:440.4px;">142.95</div>
<div class="t  r" style="right:650.0px;top:440.4px;">4 929.17</div>
<div class="t " style="left:997.0px;top:440.4px;letter-spacing:-0.40px">1E0260D</div>
<div class="t " style="left:1338.0px;top:440.4px;letter-spacing:-1.10px">SS022</div>
<div style="left:1px;top:456px;width:20px;height:21px;background:#fcfcfc"></div>
<div style="left:21px;top:456px;width:66px;height:21px;background:#f8f8f8"></div>
<div style="left:87px;top:456px;width:450px;height:21px;background:#f8f8f8"></div>
<div style="left:537px;top:456px;width:76px;height:21px;background:#fdf3e4"></div>
<div style="left:613px;top:456px;width:76px;height:21px;background:#fdf3e4"></div>
<div style="left:689px;top:456px;width:76px;height:21px;background:#fde1df"></div>
<div style="left:765px;top:456px;width:76px;height:21px;background:#fdf3e4"></div>
<div style="left:841px;top:456px;width:76px;height:21px;background:#fdf3e4"></div>
<div style="left:917px;top:456px;width:76px;height:21px;background:#fde1df"></div>
<div style="left:993px;top:456px;width:61px;height:21px;background:#f8f8f8"></div>
<div style="left:1054px;top:456px;width:56px;height:21px;background:#f8f8f8"></div>
<div style="left:1110px;top:456px;width:56px;height:21px;background:#f8f8f8"></div>
<div style="left:1166px;top:456px;width:56px;height:21px;background:#f8f8f8"></div>
<div style="left:1222px;top:456px;width:56px;height:21px;background:#f8f8f8"></div>
<div style="left:1278px;top:456px;width:56px;height:21px;background:#f8f8f8"></div>
<div style="left:1334px;top:456px;width:61px;height:21px;background:#e6e6fa"></div>
<div style="left:1395px;top:456px;width:61px;height:21px;background:#e6e6fa"></div>
<div style="left:1456px;top:456px;width:61px;height:21px;background:#e6e6fa"></div>
<div class="t " style="left:25.0px;top:461.4px;letter-spacing:-0.45px">CH001</div>
<div class="t " style="left:91.0px;top:461.4px;letter-spacing:-0.17px">Assurance chômage TrA+TrB</div>
<div class="t  r" style="right:878.0px;top:461.4px;">4 981.00</div>
<div class="t  r" style="right:650.0px;top:461.4px;">4 981.00</div>
<div class="t  r" style="right:574.0px;top:461.4px;">4.0000</div>
<div class="t  r" style="right:498.0px;top:461.4px;">199.24</div>
<div class="t " style="left:997.0px;top:461.4px;letter-spacing:-0.40px">1E0772D</div>
<div class="t " style="left:1338.0px;top:461.4px;letter-spacing:-0.45px">CH001</div>
<div class="t " style="left:1460.0px;top:461.4px;letter-spacing:-0.10px">G47.1</div>
<div style="left:1px;top:477px;width:20px;height:21px;background:#fcfcfc"></div>
<div style="left:21px;top:477px;width:66px;height:21px;background:#f8f8f8"></div>
<div style="left:87px;top:477px;width:450px;height:21px;background:#f8f8f8"></div>
<div style="left:537px;top:477px;width:76px;height:21px;background:#fdf3e4"></div>
<div style="left:613px;top:477px;width:76px;height:21px;background:#fdf3e4"></div>
<div style="left:689px;top:477px;width:76px;height:21px;background:#fde1df"></div>
<div style="left:765px;top:477px;width:76px;height:21px;background:#fdf3e4"></div>
<div style="left:841px;top:477px;width:76px;height:21px;background:#fdf3e4"></div>
<div style="left:917px;top:477px;width:76px;height:21px;background:#fde1df"></div>
<div style="left:993px;top:477px;width:61px;height:21px;background:#f8f8f8"></div>
<div style="left:1054px;top:477px;width:56px;height:21px;background:#f8f8f8"></div>
<div style="left:1110px;top:477px;width:56px;height:21px;background:#f8f8f8"></div>
<div style="left:1166px;top:477px;width:56px;height:21px;background:#f8f8f8"></div>
<div style="left:1222px;top:477px;width:56px;height:21px;background:#f8f8f8"></div>
<div style="left:1278px;top:477px;width:56px;height:21px;background:#f8f8f8"></div>
<div style="left:1334px;top:477px;width:61px;height:21px;background:#e6e6fa"></div>
<div style="left:1395px;top:477px;width:61px;height:21px;background:#e6e6fa"></div>
<div style="left:1456px;top:477px;width:61px;height:21px;background:#e6e6fa"></div>
<div class="t " style="left:25.0px;top:482.4px;letter-spacing:-0.45px">CH002</div>
<div class="t " style="left:91.0px;top:482.4px;letter-spacing:-1.00px">AGS</div>
<div class="t  r" style="right:878.0px;top:482.4px;">4 981.00</div>
<div class="t  r" style="right:650.0px;top:482.4px;">4 981.00</div>
<div class="t  r" style="right:574.0px;top:482.4px;">0.2500</div>
<div class="t  r" style="right:498.0px;top:482.4px;">12.45</div>
<div class="t " style="left:997.0px;top:482.4px;letter-spacing:-0.40px">1E0937D</div>
<div class="t " style="left:1338.0px;top:482.4px;letter-spacing:-0.45px">CH002</div>
<div style="left:1px;top:498px;width:20px;height:21px;background:#fcfcfc"></div>
<div style="left:21px;top:498px;width:66px;height:21px;background:#f8f8f8"></div>
<div style="left:87px;top:498px;width:450px;height:21px;background:#f8f8f8"></div>
<div style="left:537px;top:498px;width:76px;height:21px;background:#fdf3e4"></div>
<div style="left:613px;top:498px;width:76px;height:21px;background:#fdf3e4"></div>
<div style="left:689px;top:498px;width:76px;height:21px;background:#fde1df"></div>
<div style="left:765px;top:498px;width:76px;height:21px;background:#fdf3e4"></div>
<div style="left:841px;top:498px;width:76px;height:21px;background:#fdf3e4"></div>
<div style="left:917px;top:498px;width:76px;height:21px;background:#fde1df"></div>
<div style="left:993px;top:498px;width:61px;height:21px;background:#f8f8f8"></div>
<div style="left:1054px;top:498px;width:56px;height:21px;background:#f8f8f8"></div>
<div style="left:1110px;top:498px;width:56px;height:21px;background:#f8f8f8"></div>
<div style="left:1166px;top:498px;width:56px;height:21px;background:#f8f8f8"></div>
<div style="left:1222px;top:498px;width:56px;height:21px;background:#f8f8f8"></div>
<div style="left:1278px;top:498px;width:56px;height:21px;background:#f8f8f8"></div>
<div style="left:1334px;top:498px;width:61px;height:21px;background:#e6e6fa"></div>
<div style="left:1395px;top:498px;width:61px;height:21px;background:#e6e6fa"></div>
<div style="left:1456px;top:498px;width:61px;height:21px;background:#e6e6fa"></div>
<div class="t " style="left:25.0px;top:503.4px;letter-spacing:-0.80px">AA201</div>
<div class="t " style="left:91.0px;top:503.4px;letter-spacing:0.13px">Retraite TU1</div>
<div class="t  r" style="right:878.0px;top:503.4px;">4 005.00</div>
<div class="t  r" style="right:802.0px;top:503.4px;">3.1500</div>
<div class="t  r" style="right:726.0px;top:503.4px;">126.16</div>
<div class="t  r" style="right:650.0px;top:503.4px;">4 005.00</div>
<div class="t  r" style="right:574.0px;top:503.4px;">4.7200</div>
<div class="t  r" style="right:498.0px;top:503.4px;">189.04</div>
<div class="t " style="left:997.0px;top:503.4px;letter-spacing:0.00px">4024001</div>
<div class="t " style="left:1338.0px;top:503.4px;letter-spacing:-0.80px">AA201</div>
<div style="left:1px;top:519px;width:20px;height:21px;background:#fcfcfc"></div>
<div style="left:21px;top:519px;width:66px;height:21px;background:#f8f8f8"></div>
<div style="left:87px;top:519px;width:450px;height:21px;background:#f8f8f8"></div>
<div style="left:537px;top:519px;width:76px;height:21px;background:#fdf3e4"></div>
<div style="left:613px;top:519px;width:76px;height:21px;background:#fdf3e4"></div>
<div style="left:689px;top:519px;width:76px;height:21px;background:#fde1df"></div>
<div style="left:765px;top:519px;width:76px;height:21px;background:#fdf3e4"></div>
<div style="left:841px;top:519px;width:76px;height:21px;background:#fdf3e4"></div>
<div style="left:917px;top:519px;width:76px;height:21px;background:#fde1df"></div>
<div style="left:993px;top:519px;width:61px;height:21px;background:#f8f8f8"></div>
<div style="left:1054px;top:519px;width:56px;height:21px;background:#f8f8f8"></div>
<div style="left:1110px;top:519px;width:56px;height:21px;background:#f8f8f8"></div>
<div style="left:1166px;top:519px;width:56px;height:21px;background:#f8f8f8"></div>
<div style="left:1222px;top:519px;width:56px;height:21px;background:#f8f8f8"></div>
<div style="left:1278px;top:519px;width:56px;height:21px;background:#f8f8f8"></div>
<div style="left:1334px;top:519px;width:61px;height:21px;background:#e6e6fa"></div>
<div style="left:1395px;top:519px;width:61px;height:21px;background:#e6e6fa"></div>
<div style="left:1456px;top:519px;width:61px;height:21px;background:#e6e6fa"></div>
<div class="t " style="left:25.0px;top:524.4px;letter-spacing:-0.80px">AA202</div>
<div class="t " style="left:91.0px;top:524.4px;letter-spacing:0.19px">Retraite TU2</div>
<div class="t  r" style="right:878.0px;top:524.4px;">976.00</div>
<div class="t  r" style="right:802.0px;top:524.4px;">8.6400</div>
<div class="t  r" style="right:726.0px;top:524.4px;">84.33</div>
<div class="t  r" style="right:650.0px;top:524.4px;">976.00</div>
<div class="t  r" style="right:574.0px;top:524.4px;">12.9500</div>
<div class="t  r" style="right:498.0px;top:524.4px;">126.39</div>
<div class="t " style="left:997.0px;top:524.4px;letter-spacing:0.00px">4024019</div>
<div class="t " style="left:1338.0px;top:524.4px;letter-spacing:-0.80px">AA202</div>
<div style="left:1px;top:540px;width:20px;height:21px;background:#fcfcfc"></div>
<div style="left:21px;top:540px;width:66px;height:21px;background:#f8f8f8"></div>
<div style="left:87px;top:540px;width:450px;height:21px;background:#f8f8f8"></div>
<div style="left:537px;top:540px;width:76px;height:21px;background:#fdf3e4"></div>
<div style="left:613px;top:540px;width:76px;height:21px;background:#fdf3e4"></div>
<div style="left:689px;top:540px;width:76px;height:21px;background:#fde1df"></div>
<div style="left:765px;top:540px;width:76px;height:21px;background:#fdf3e4"></div>
<div style="left:841px;top:540px;width:76px;height:21px;background:#fdf3e4"></div>
<div style="left:917px;top:540px;width:76px;height:21px;background:#fde1df"></div>
<div style="left:993px;top:540px;width:61px;height:21px;background:#f8f8f8"></div>
<div style="left:1054px;top:540px;width:56px;height:21px;background:#f8f8f8"></div>
<div style="left:1110px;top:540px;width:56px;height:21px;background:#f8f8f8"></div>
<div style="left:1166px;top:540px;width:56px;height:21px;background:#f8f8f8"></div>
<div style="left:1222px;top:540px;width:56px;height:21px;background:#f8f8f8"></div>
<div style="left:1278px;top:540px;width:56px;height:21px;background:#f8f8f8"></div>
<div style="left:1334px;top:540px;width:61px;height:21px;background:#e6e6fa"></div>
<div style="left:1395px;top:540px;width:61px;height:21px;background:#e6e6fa"></div>
<div style="left:1456px;top:540px;width:61px;height:21px;background:#e6e6fa"></div>
<div class="t " style="left:25.0px;top:545.4px;letter-spacing:-0.80px">AA211</div>
<div class="t " style="left:91.0px;top:545.4px;letter-spacing:0.05px">Contribution d&#x27;Equilibre Général TU1</div>
<div class="t  r" style="right:878.0px;top:545.4px;">4 005.00</div>
<div class="t  r" style="right:802.0px;top:545.4px;">0.8600</div>
<div class="t  r" style="right:726.0px;top:545.4px;">34.44</div>
<div class="t  r" style="right:650.0px;top:545.4px;">4 005.00</div>
<div class="t  r" style="right:574.0px;top:545.4px;">1.2900</div>
<div class="t  r" style="right:498.0px;top:545.4px;">51.66</div>
<div class="t " style="left:997.0px;top:545.4px;letter-spacing:0.00px">4024001</div>
<div class="t " style="left:1338.0px;top:545.4px;letter-spacing:-0.80px">AA211</div>
<div style="left:1px;top:561px;width:20px;height:21px;background:#fcfcfc"></div>
<div style="left:21px;top:561px;width:66px;height:21px;background:#f8f8f8"></div>
<div style="left:87px;top:561px;width:450px;height:21px;background:#f8f8f8"></div>
<div style="left:537px;top:561px;width:76px;height:21px;background:#fdf3e4"></div>
<div style="left:613px;top:561px;width:76px;height:21px;background:#fdf3e4"></div>
<div style="left:689px;top:561px;width:76px;height:21px;background:#fde1df"></div>
<div style="left:765px;top:561px;width:76px;height:21px;background:#fdf3e4"></div>
<div style="left:841px;top:561px;width:76px;height:21px;background:#fdf3e4"></div>
<div style="left:917px;top:561px;width:76px;height:21px;background:#fde1df"></div>
<div style="left:993px;top:561px;width:61px;height:21px;background:#f8f8f8"></div>
<div style="left:1054px;top:561px;width:56px;height:21px;background:#f8f8f8"></div>
<div style="left:1110px;top:561px;width:56px;height:21px;background:#f8f8f8"></div>
<div style="left:1166px;top:561px;width:56px;height:21px;background:#f8f8f8"></div>
<div style="left:1222px;top:561px;width:56px;height:21px;background:#f8f8f8"></div>
<div style="left:1278px;top:561px;width:56px;height:21px;background:#f8f8f8"></div>
<div style="left:1334px;top:561px;width:61px;height:21px;background:#e6e6fa"></div>
<div style="left:1395px;top:561px;width:61px;height:21px;background:#e6e6fa"></div>
<div style="left:1456px;top:561px;width:61px;height:21px;background:#e6e6fa"></div>
<div class="t " style="left:25.0px;top:566.4px;letter-spacing:-0.80px">AA212</div>
<div class="t " style="left:91.0px;top:566.4px;letter-spacing:0.07px">Contribution d&#x27;Equilibre Général TU2</div>
<div class="t  r" style="right:878.0px;top:566.4px;">976.00</div>
<div class="t  r" style="right:802.0px;top:566.4px;">1.0800</div>
<div class="t  r" style="right:726.0px;top:566.4px;">10.54</div>
<div class="t  r" style="right:650.0px;top:566.4px;">976.00</div>
<div class="t  r" style="right:574.0px;top:566.4px;">1.6200</div>
<div class="t  r" style="right:498.0px;top:566.4px;">15.81</div>
<div class="t " style="left:997.0px;top:566.4px;letter-spacing:0.00px">4024019</div>
<div class="t " style="left:1338.0px;top:566.4px;letter-spacing:-0.80px">AA212</div>
<div style="left:1px;top:582px;width:20px;height:21px;background:#fcfcfc"></div>
<div style="left:21px;top:582px;width:66px;height:21px;background:#f8f8f8"></div>
<div style="left:87px;top:582px;width:450px;height:21px;background:#f8f8f8"></div>
<div style="left:537px;top:582px;width:76px;height:21px;background:#fdf3e4"></div>
<div style="left:613px;top:582px;width:76px;height:21px;background:#fdf3e4"></div>
<div style="left:689px;top:582px;width:76px;height:21px;background:#fde1df"></div>
<div style="left:765px;top:582px;width:76px;height:21px;background:#fdf3e4"></div>
<div style="left:841px;top:582px;width:76px;height:21px;background:#fdf3e4"></div>
<div style="left:917px;top:582px;width:76px;height:21px;background:#fde1df"></div>
<div style="left:993px;top:582px;width:61px;height:21px;background:#f8f8f8"></div>
<div style="left:1054px;top:582px;width:56px;height:21px;background:#f8f8f8"></div>
<div style="left:1110px;top:582px;width:56px;height:21px;background:#f8f8f8"></div>
<div style="left:1166px;top:582px;width:56px;height:21px;background:#f8f8f8"></div>
<div style="left:1222px;top:582px;width:56px;height:21px;background:#f8f8f8"></div>
<div style="left:1278px;top:582px;width:56px;height:21px;background:#f8f8f8"></div>
<div style="left:1334px;top:582px;width:61px;height:21px;background:#e6e6fa"></div>
<div style="left:1395px;top:582px;width:61px;height:21px;background:#e6e6fa"></div>
<div style="left:1456px;top:582px;width:61px;height:21px;background:#e6e6fa"></div>
<div class="t " style="left:25.0px;top:587.4px;letter-spacing:-0.80px">AA221</div>
<div class="t " style="left:91.0px;top:587.4px;letter-spacing:0.09px">Contribution d&#x27;Equilibre Technique TU1</div>
<div class="t  r" style="right:878.0px;top:587.4px;">8 010.00</div>
<div class="t  r" style="right:802.0px;top:587.4px;">0.1400</div>
<div class="t  r" style="right:726.0px;top:587.4px;">11.21</div>
<div class="t  r" style="right:650.0px;top:587.4px;">8 010.00</div>
<div class="t  r" style="right:574.0px;top:587.4px;">0.2100</div>
<div class="t  r" style="right:498.0px;top:587.4px;">16.82</div>
<div class="t " style="left:997.0px;top:587.4px;letter-spacing:0.00px">4024001</div>
<div class="t " style="left:1338.0px;top:587.4px;letter-spacing:-0.80px">AA221</div>
<div style="left:1px;top:603px;width:20px;height:21px;background:#fcfcfc"></div>
<div style="left:21px;top:603px;width:66px;height:21px;background:#f8f8f8"></div>
<div style="left:87px;top:603px;width:450px;height:21px;background:#f8f8f8"></div>
<div style="left:537px;top:603px;width:76px;height:21px;background:#fdf3e4"></div>
<div style="left:613px;top:603px;width:76px;height:21px;background:#fdf3e4"></div>
<div style="left:689px;top:603px;width:76px;height:21px;background:#fde1df"></div>
<div style="left:765px;top:603px;width:76px;height:21px;background:#fdf3e4"></div>
<div style="left:841px;top:603px;width:76px;height:21px;background:#fdf3e4"></div>
<div style="left:917px;top:603px;width:76px;height:21px;background:#fde1df"></div>
<div style="left:993px;top:603px;width:61px;height:21px;background:#f8f8f8"></div>
<div style="left:1054px;top:603px;width:56px;height:21px;background:#f8f8f8"></div>
<div style="left:1110px;top:603px;width:56px;height:21px;background:#f8f8f8"></div>
<div style="left:1166px;top:603px;width:56px;height:21px;background:#f8f8f8"></div>
<div style="left:1222px;top:603px;width:56px;height:21px;background:#f8f8f8"></div>
<div style="left:1278px;top:603px;width:56px;height:21px;background:#f8f8f8"></div>
<div style="left:1334px;top:603px;width:61px;height:21px;background:#e6e6fa"></div>
<div style="left:1395px;top:603px;width:61px;height:21px;background:#e6e6fa"></div>
<div style="left:1456px;top:603px;width:61px;height:21px;background:#e6e6fa"></div>
<div class="t " style="left:25.0px;top:608.4px;letter-spacing:-0.80px">AA222</div>
<div class="t " style="left:91.0px;top:608.4px;letter-spacing:0.10px">Contribution d&#x27;Equilibre Technique TU2</div>
<div class="t  r" style="right:878.0px;top:608.4px;">1 952.00</div>
<div class="t  r" style="right:802.0px;top:608.4px;">0.1400</div>
<div class="t  r" style="right:726.0px;top:608.4px;">2.73</div>
<div class="t  r" style="right:650.0px;top:608.4px;">1 952.00</div>
<div class="t  r" style="right:574.0px;top:608.4px;">0.2100</div>
<div class="t  r" style="right:498.0px;top:608.4px;">4.10</div>
<div class="t " style="left:997.0px;top:608.4px;letter-spacing:0.00px">4024019</div>
<div class="t " style="left:1338.0px;top:608.4px;letter-spacing:-0.80px">AA221</div>
<div style="left:1px;top:624px;width:20px;height:21px;background:#fcfcfc"></div>
<div style="left:21px;top:624px;width:66px;height:21px;background:#f8f8f8"></div>
<div style="left:87px;top:624px;width:450px;height:21px;background:#f8f8f8"></div>
<div style="left:537px;top:624px;width:76px;height:21px;background:#fdf3e4"></div>
<div style="left:613px;top:624px;width:76px;height:21px;background:#fdf3e4"></div>
<div style="left:689px;top:624px;width:76px;height:21px;background:#fde1df"></div>
<div style="left:765px;top:624px;width:76px;height:21px;background:#fdf3e4"></div>
<div style="left:841px;top:624px;width:76px;height:21px;background:#fdf3e4"></div>
<div style="left:917px;top:624px;width:76px;height:21px;background:#fde1df"></div>
<div style="left:993px;top:624px;width:61px;height:21px;background:#f8f8f8"></div>
<div style="left:1054px;top:624px;width:56px;height:21px;background:#f8f8f8"></div>
<div style="left:1110px;top:624px;width:56px;height:21px;background:#f8f8f8"></div>
<div style="left:1166px;top:624px;width:56px;height:21px;background:#f8f8f8"></div>
<div style="left:1222px;top:624px;width:56px;height:21px;background:#f8f8f8"></div>
<div style="left:1278px;top:624px;width:56px;height:21px;background:#f8f8f8"></div>
<div style="left:1334px;top:624px;width:61px;height:21px;background:#e6e6fa"></div>
<div style="left:1395px;top:624px;width:61px;height:21px;background:#e6e6fa"></div>
<div style="left:1456px;top:624px;width:61px;height:21px;background:#e6e6fa"></div>
<div class="t " style="left:25.0px;top:629.4px;letter-spacing:-1.10px">SS043</div>
<div class="t " style="left:91.0px;top:629.4px;letter-spacing:-0.03px">Allocations familiales (complément)</div>
<div class="t  r" style="right:650.0px;top:629.4px;">- 5 778.33</div>
<div class="t  r" style="right:574.0px;top:629.4px;">1.8000</div>
<div class="t  r" style="right:498.0px;top:629.4px;">- 104.01</div>
<div class="t " style="left:997.0px;top:629.4px;letter-spacing:-0.10px">1F0437</div>
<div class="t " style="left:1338.0px;top:629.4px;letter-spacing:-1.10px">SS042</div>
<div style="left:1px;top:645px;width:20px;height:21px;background:#fcfcfc"></div>
<div style="left:21px;top:645px;width:66px;height:21px;background:#f8f8f8"></div>
<div style="left:87px;top:645px;width:450px;height:21px;background:#f8f8f8"></div>
<div style="left:537px;top:645px;width:76px;height:21px;background:#fdf3e4"></div>
<div style="left:613px;top:645px;width:76px;height:21px;background:#fdf3e4"></div>
<div style="left:689px;top:645px;width:76px;height:21px;background:#fde1df"></div>
<div style="left:765px;top:645px;width:76px;height:21px;background:#fdf3e4"></div>
<div style="left:841px;top:645px;width:76px;height:21px;background:#fdf3e4"></div>
<div style="left:917px;top:645px;width:76px;height:21px;background:#fde1df"></div>
<div style="left:993px;top:645px;width:61px;height:21px;background:#f8f8f8"></div>
<div style="left:1054px;top:645px;width:56px;height:21px;background:#f8f8f8"></div>
<div style="left:1110px;top:645px;width:56px;height:21px;background:#f8f8f8"></div>
<div style="left:1166px;top:645px;width:56px;height:21px;background:#f8f8f8"></div>
<div style="left:1222px;top:645px;width:56px;height:21px;background:#f8f8f8"></div>
<div style="left:1278px;top:645px;width:56px;height:21px;background:#f8f8f8"></div>
<div style="left:1334px;top:645px;width:61px;height:21px;background:#e6e6fa"></div>
<div style="left:1395px;top:645px;width:61px;height:21px;background:#e6e6fa"></div>
<div style="left:1456px;top:645px;width:61px;height:21px;background:#e6e6fa"></div>
<div class="t " style="left:25.0px;top:650.4px;letter-spacing:-1.10px">SS046</div>
<div class="t " style="left:91.0px;top:650.4px;letter-spacing:-0.06px">Maladie (complément)</div>
<div class="t  r" style="right:878.0px;top:650.4px;">10 759.10</div>
<div class="t  r" style="right:650.0px;top:650.4px;">10 759.10</div>
<div class="t  r" style="right:574.0px;top:650.4px;">6.0000</div>
<div class="t  r" style="right:498.0px;top:650.4px;">645.55</div>
<div class="t " style="left:997.0px;top:650.4px;letter-spacing:-0.40px">1E0635D</div>
<div class="t " style="left:1338.0px;top:650.4px;letter-spacing:-1.10px">SS046</div>
<div style="left:1px;top:666px;width:20px;height:21px;background:#fcfcfc"></div>
<div style="left:21px;top:666px;width:66px;height:21px;background:#f8f8f8"></div>
<div style="left:87px;top:666px;width:450px;height:21px;background:#f8f8f8"></div>
<div style="left:537px;top:666px;width:76px;height:21px;background:#fdf3e4"></div>
<div style="left:613px;top:666px;width:76px;height:21px;background:#fdf3e4"></div>
<div style="left:689px;top:666px;width:76px;height:21px;background:#fde1df"></div>
<div style="left:765px;top:666px;width:76px;height:21px;background:#fdf3e4"></div>
<div style="left:841px;top:666px;width:76px;height:21px;background:#fdf3e4"></div>
<div style="left:917px;top:666px;width:76px;height:21px;background:#fde1df"></div>
<div style="left:993px;top:666px;width:61px;height:21px;background:#f8f8f8"></div>
<div style="left:1054px;top:666px;width:56px;height:21px;background:#f8f8f8"></div>
<div style="left:1110px;top:666px;width:56px;height:21px;background:#f8f8f8"></div>
<div style="left:1166px;top:666px;width:56px;height:21px;background:#f8f8f8"></div>
<div style="left:1222px;top:666px;width:56px;height:21px;background:#f8f8f8"></div>
<div style="left:1278px;top:666px;width:56px;height:21px;background:#f8f8f8"></div>
<div style="left:1334px;top:666px;width:61px;height:21px;background:#e6e6fa"></div>
<div style="left:1395px;top:666px;width:61px;height:21px;background:#e6e6fa"></div>
<div style="left:1456px;top:666px;width:61px;height:21px;background:#e6e6fa"></div>
<div class="t " style="left:25.0px;top:671.4px;letter-spacing:-1.10px">SS050</div>
<div class="t " style="left:91.0px;top:671.4px;letter-spacing:0.16px">Contribution au dialogue social</div>
<div class="t  r" style="right:878.0px;top:671.4px;">4 981.00</div>
<div class="t  r" style="right:650.0px;top:671.4px;">4 981.00</div>
<div class="t  r" style="right:574.0px;top:671.4px;">0.0160</div>
<div class="t  r" style="right:498.0px;top:671.4px;">0.80</div>
<div class="t " style="left:997.0px;top:671.4px;letter-spacing:-0.40px">1E0027D</div>
<div class="t " style="left:1338.0px;top:671.4px;letter-spacing:-1.10px">SS050</div>
<div style="left:1px;top:687px;width:20px;height:21px;background:#fcfcfc"></div>
<div style="left:21px;top:687px;width:66px;height:21px;background:#f8f8f8"></div>
<div style="left:87px;top:687px;width:450px;height:21px;background:#f8f8f8"></div>
<div style="left:537px;top:687px;width:76px;height:21px;background:#fdf3e4"></div>
<div style="left:613px;top:687px;width:76px;height:21px;background:#fdf3e4"></div>
<div style="left:689px;top:687px;width:76px;height:21px;background:#fde1df"></div>
<div style="left:765px;top:687px;width:76px;height:21px;background:#fdf3e4"></div>
<div style="left:841px;top:687px;width:76px;height:21px;background:#fdf3e4"></div>
<div style="left:917px;top:687px;width:76px;height:21px;background:#fde1df"></div>
<div style="left:993px;top:687px;width:61px;height:21px;background:#f8f8f8"></div>
<div style="left:1054px;top:687px;width:56px;height:21px;background:#f8f8f8"></div>
<div style="left:1110px;top:687px;width:56px;height:21px;background:#f8f8f8"></div>
<div style="left:1166px;top:687px;width:56px;height:21px;background:#f8f8f8"></div>
<div style="left:1222px;top:687px;width:56px;height:21px;background:#f8f8f8"></div>
<div style="left:1278px;top:687px;width:56px;height:21px;background:#f8f8f8"></div>
<div style="left:1334px;top:687px;width:61px;height:21px;background:#e6e6fa"></div>
<div style="left:1395px;top:687px;width:61px;height:21px;background:#e6e6fa"></div>
<div style="left:1456px;top:687px;width:61px;height:21px;background:#e6e6fa"></div>
<div class="t " style="left:25.0px;top:692.4px;letter-spacing:-0.63px">PR110</div>
<div class="t " style="left:91.0px;top:692.4px;letter-spacing:0.08px">Prévoyance non cadre TrA</div>
<div class="t  r" style="right:878.0px;top:692.4px;">4 005.00</div>
<div class="t  r" style="right:802.0px;top:692.4px;">0.3330</div>
<div class="t  r" style="right:726.0px;top:692.4px;">13.34</div>
<div class="t  r" style="right:650.0px;top:692.4px;">4 005.00</div>
<div class="t  r" style="right:574.0px;top:692.4px;">0.4070</div>
<div class="t  r" style="right:498.0px;top:692.4px;">16.30</div>
<div class="t " style="left:997.0px;top:692.4px;letter-spacing:0.00px">5024001</div>
<div class="t  r" style="right:381.0px;top:692.4px;">16.30</div>
<div class="t  r" style="right:325.0px;top:692.4px;">16.30</div>
<div class="t  r" style="right:269.0px;top:692.4px;">16.30</div>
<div class="t  r" style="right:213.0px;top:692.4px;">29.64</div>
<div class="t " style="left:1338.0px;top:692.4px;letter-spacing:-0.63px">PR110</div>
<div style="left:1px;top:708px;width:20px;height:21px;background:#fcfcfc"></div>
<div style="left:21px;top:708px;width:66px;height:21px;background:#f8f8f8"></div>
<div style="left:87px;top:708px;width:450px;height:21px;background:#f8f8f8"></div>
<div style="left:537px;top:708px;width:76px;height:21px;background:#fdf3e4"></div>
<div style="left:613px;top:708px;width:76px;height:21px;background:#fdf3e4"></div>
<div style="left:689px;top:708px;width:76px;height:21px;background:#fde1df"></div>
<div style="left:765px;top:708px;width:76px;height:21px;background:#fdf3e4"></div>
<div style="left:841px;top:708px;width:76px;height:21px;background:#fdf3e4"></div>
<div style="left:917px;top:708px;width:76px;height:21px;background:#fde1df"></div>
<div style="left:993px;top:708px;width:61px;height:21px;background:#f8f8f8"></div>
<div style="left:1054px;top:708px;width:56px;height:21px;background:#f8f8f8"></div>
<div style="left:1110px;top:708px;width:56px;height:21px;background:#f8f8f8"></div>
<div style="left:1166px;top:708px;width:56px;height:21px;background:#f8f8f8"></div>
<div style="left:1222px;top:708px;width:56px;height:21px;background:#f8f8f8"></div>
<div style="left:1278px;top:708px;width:56px;height:21px;background:#f8f8f8"></div>
<div style="left:1334px;top:708px;width:61px;height:21px;background:#e6e6fa"></div>
<div style="left:1395px;top:708px;width:61px;height:21px;background:#e6e6fa"></div>
<div style="left:1456px;top:708px;width:61px;height:21px;background:#e6e6fa"></div>
<div class="t " style="left:25.0px;top:713.4px;letter-spacing:-0.63px">PR120</div>
<div class="t " style="left:91.0px;top:713.4px;letter-spacing:0.04px">Prévoyance non cadre TrB</div>
<div class="t  r" style="right:878.0px;top:713.4px;">976.00</div>
<div class="t  r" style="right:802.0px;top:713.4px;">0.3330</div>
<div class="t  r" style="right:726.0px;top:713.4px;">3.25</div>
<div class="t  r" style="right:650.0px;top:713.4px;">976.00</div>
<div class="t  r" style="right:574.0px;top:713.4px;">0.4070</div>
<div class="t  r" style="right:498.0px;top:713.4px;">3.97</div>
<div class="t " style="left:997.0px;top:713.4px;letter-spacing:0.00px">5024004</div>
<div class="t  r" style="right:381.0px;top:713.4px;">3.97</div>
<div class="t  r" style="right:325.0px;top:713.4px;">3.97</div>
<div class="t  r" style="right:269.0px;top:713.4px;">3.97</div>
<div class="t  r" style="right:213.0px;top:713.4px;">7.22</div>
<div class="t " style="left:1338.0px;top:713.4px;letter-spacing:-0.63px">PR120</div>
<div style="left:1px;top:729px;width:20px;height:21px;background:#fcfcfc"></div>
<div style="left:21px;top:729px;width:66px;height:21px;background:#f8f8f8"></div>
<div style="left:87px;top:729px;width:450px;height:21px;background:#f8f8f8"></div>
<div style="left:537px;top:729px;width:76px;height:21px;background:#fdf3e4"></div>
<div style="left:613px;top:729px;width:76px;height:21px;background:#fdf3e4"></div>
<div style="left:689px;top:729px;width:76px;height:21px;background:#fde1df"></div>
<div style="left:765px;top:729px;width:76px;height:21px;background:#fdf3e4"></div>
<div style="left:841px;top:729px;width:76px;height:21px;background:#fdf3e4"></div>
<div style="left:917px;top:729px;width:76px;height:21px;background:#fde1df"></div>
<div style="left:993px;top:729px;width:61px;height:21px;background:#f8f8f8"></div>
<div style="left:1054px;top:729px;width:56px;height:21px;background:#f8f8f8"></div>
<div style="left:1110px;top:729px;width:56px;height:21px;background:#f8f8f8"></div>
<div style="left:1166px;top:729px;width:56px;height:21px;background:#f8f8f8"></div>
<div style="left:1222px;top:729px;width:56px;height:21px;background:#f8f8f8"></div>
<div style="left:1278px;top:729px;width:56px;height:21px;background:#f8f8f8"></div>
<div style="left:1334px;top:729px;width:61px;height:21px;background:#e6e6fa"></div>
<div style="left:1395px;top:729px;width:61px;height:21px;background:#e6e6fa"></div>
<div style="left:1456px;top:729px;width:61px;height:21px;background:#e6e6fa"></div>
<div class="t " style="left:25.0px;top:734.4px;letter-spacing:-0.63px">PR240</div>
<div class="t " style="left:91.0px;top:734.4px;letter-spacing:0.08px">Prévoyance non cadre TrA</div>
<div class="t  r" style="right:878.0px;top:734.4px;">4 005.00</div>
<div class="t  r" style="right:802.0px;top:734.4px;">0.2475</div>
<div class="t  r" style="right:726.0px;top:734.4px;">9.91</div>
<div class="t  r" style="right:650.0px;top:734.4px;">4 005.00</div>
<div class="t  r" style="right:574.0px;top:734.4px;">0.3025</div>
<div class="t  r" style="right:498.0px;top:734.4px;">12.12</div>
<div class="t " style="left:997.0px;top:734.4px;letter-spacing:0.00px">5024001</div>
<div class="t  r" style="right:381.0px;top:734.4px;">12.12</div>
<div class="t  r" style="right:325.0px;top:734.4px;">12.12</div>
<div class="t  r" style="right:269.0px;top:734.4px;">12.12</div>
<div class="t  r" style="right:213.0px;top:734.4px;">22.03</div>
<div class="t " style="left:1338.0px;top:734.4px;letter-spacing:-0.63px">PR240</div>
<div style="left:1px;top:750px;width:20px;height:21px;background:#fcfcfc"></div>
<div style="left:21px;top:750px;width:66px;height:21px;background:#f8f8f8"></div>
<div style="left:87px;top:750px;width:450px;height:21px;background:#f8f8f8"></div>
<div style="left:537px;top:750px;width:76px;height:21px;background:#fdf3e4"></div>
<div style="left:613px;top:750px;width:76px;height:21px;background:#fdf3e4"></div>
<div style="left:689px;top:750px;width:76px;height:21px;background:#fde1df"></div>
<div style="left:765px;top:750px;width:76px;height:21px;background:#fdf3e4"></div>
<div style="left:841px;top:750px;width:76px;height:21px;background:#fdf3e4"></div>
<div style="left:917px;top:750px;width:76px;height:21px;background:#fde1df"></div>
<div style="left:993px;top:750px;width:61px;height:21px;background:#f8f8f8"></div>
<div style="left:1054px;top:750px;width:56px;height:21px;background:#f8f8f8"></div>
<div style="left:1110px;top:750px;width:56px;height:21px;background:#f8f8f8"></div>
<div style="left:1166px;top:750px;width:56px;height:21px;background:#f8f8f8"></div>
<div style="left:1222px;top:750px;width:56px;height:21px;background:#f8f8f8"></div>
<div style="left:1278px;top:750px;width:56px;height:21px;background:#f8f8f8"></div>
<div style="left:1334px;top:750px;width:61px;height:21px;background:#e6e6fa"></div>
<div style="left:1395px;top:750px;width:61px;height:21px;background:#e6e6fa"></div>
<div style="left:1456px;top:750px;width:61px;height:21px;background:#e6e6fa"></div>
<div class="t " style="left:25.0px;top:755.4px;letter-spacing:-0.63px">PR240.B</div>
<div class="t " style="left:91.0px;top:755.4px;letter-spacing:0.04px">Prévoyance non cadre TrB</div>
<div class="t  r" style="right:878.0px;top:755.4px;">976.00</div>
<div class="t  r" style="right:802.0px;top:755.4px;">0.2475</div>
<div class="t  r" style="right:726.0px;top:755.4px;">2.42</div>
<div class="t  r" style="right:650.0px;top:755.4px;">976.00</div>
<div class="t  r" style="right:574.0px;top:755.4px;">0.3025</div>
<div class="t  r" style="right:498.0px;top:755.4px;">2.95</div>
<div class="t " style="left:997.0px;top:755.4px;letter-spacing:0.00px">5024004</div>
<div class="t  r" style="right:381.0px;top:755.4px;">2.95</div>
<div class="t  r" style="right:325.0px;top:755.4px;">2.95</div>
<div class="t  r" style="right:269.0px;top:755.4px;">2.95</div>
<div class="t  r" style="right:213.0px;top:755.4px;">5.37</div>
<div class="t " style="left:1338.0px;top:755.4px;letter-spacing:-0.63px">PR240</div>
<div style="left:1px;top:771px;width:20px;height:21px;background:#fcfcfc"></div>
<div style="left:21px;top:771px;width:66px;height:21px;background:#f8f8f8"></div>
<div style="left:87px;top:771px;width:450px;height:21px;background:#f8f8f8"></div>
<div style="left:537px;top:771px;width:76px;height:21px;background:#fdf3e4"></div>
<div style="left:613px;top:771px;width:76px;height:21px;background:#fdf3e4"></div>
<div style="left:689px;top:771px;width:76px;height:21px;background:#fde1df"></div>
<div style="left:765px;top:771px;width:76px;height:21px;background:#fdf3e4"></div>
<div style="left:841px;top:771px;width:76px;height:21px;background:#fdf3e4"></div>
<div style="left:917px;top:771px;width:76px;height:21px;background:#fde1df"></div>
<div style="left:993px;top:771px;width:61px;height:21px;background:#f8f8f8"></div>
<div style="left:1054px;top:771px;width:56px;height:21px;background:#f8f8f8"></div>
<div style="left:1110px;top:771px;width:56px;height:21px;background:#f8f8f8"></div>
<div style="left:1166px;top:771px;width:56px;height:21px;background:#f8f8f8"></div>
<div style="left:1222px;top:771px;width:56px;height:21px;background:#f8f8f8"></div>
<div style="left:1278px;top:771px;width:56px;height:21px;background:#f8f8f8"></div>
<div style="left:1334px;top:771px;width:61px;height:21px;background:#e6e6fa"></div>
<div style="left:1395px;top:771px;width:61px;height:21px;background:#e6e6fa"></div>
<div style="left:1456px;top:771px;width:61px;height:21px;background:#e6e6fa"></div>
<div class="t " style="left:25.0px;top:776.4px;letter-spacing:-0.20px">TC001.L</div>
<div class="t " style="left:91.0px;top:776.4px;letter-spacing:0.30px">Contribution formation prof. (légal)</div>
<div class="t  r" style="right:878.0px;top:776.4px;">4 981.00</div>
<div class="t  r" style="right:650.0px;top:776.4px;">4 981.00</div>
<div class="t  r" style="right:574.0px;top:776.4px;">0.5500</div>
<div class="t  r" style="right:498.0px;top:776.4px;">27.40</div>
<div class="t " style="left:997.0px;top:776.4px;letter-spacing:-0.10px">1E0959</div>
<div class="t " style="left:1338.0px;top:776.4px;letter-spacing:-0.70px">TCL00</div>
<div style="left:1px;top:792px;width:20px;height:21px;background:#fcfcfc"></div>
<div style="left:21px;top:792px;width:66px;height:21px;background:#f8f8f8"></div>
<div style="left:87px;top:792px;width:450px;height:21px;background:#f8f8f8"></div>
<div style="left:537px;top:792px;width:76px;height:21px;background:#fdf3e4"></div>
<div style="left:613px;top:792px;width:76px;height:21px;background:#fdf3e4"></div>
<div style="left:689px;top:792px;width:76px;height:21px;background:#fde1df"></div>
<div style="left:765px;top:792px;width:76px;height:21px;background:#fdf3e4"></div>
<div style="left:841px;top:792px;width:76px;height:21px;background:#fdf3e4"></div>
<div style="left:917px;top:792px;width:76px;height:21px;background:#fde1df"></div>
<div style="left:993px;top:792px;width:61px;height:21px;background:#f8f8f8"></div>
<div style="left:1054px;top:792px;width:56px;height:21px;background:#f8f8f8"></div>
<div style="left:1110px;top:792px;width:56px;height:21px;background:#f8f8f8"></div>
<div style="left:1166px;top:792px;width:56px;height:21px;background:#f8f8f8"></div>
<div style="left:1222px;top:792px;width:56px;height:21px;background:#f8f8f8"></div>
<div style="left:1278px;top:792px;width:56px;height:21px;background:#f8f8f8"></div>
<div style="left:1334px;top:792px;width:61px;height:21px;background:#e6e6fa"></div>
<div style="left:1395px;top:792px;width:61px;height:21px;background:#e6e6fa"></div>
<div style="left:1456px;top:792px;width:61px;height:21px;background:#e6e6fa"></div>
<div class="t " style="left:25.0px;top:797.4px;letter-spacing:-0.70px">TC001</div>
<div class="t " style="left:91.0px;top:797.4px;letter-spacing:0.32px">Contribution formation prof. (conventionnel)</div>
<div class="t  r" style="right:878.0px;top:797.4px;">4 981.00</div>
<div class="t  r" style="right:650.0px;top:797.4px;">4 981.00</div>
<div class="t  r" style="right:574.0px;top:797.4px;">0.0750</div>
<div class="t  r" style="right:498.0px;top:797.4px;">3.74</div>
<div class="t " style="left:997.0px;top:797.4px;letter-spacing:-0.10px">A0999016</div>
<div class="t " style="left:1338.0px;top:797.4px;letter-spacing:-0.70px">TC100</div>
<div style="left:1px;top:813px;width:20px;height:21px;background:#fcfcfc"></div>
<div style="left:21px;top:813px;width:66px;height:21px;background:#f8f8f8"></div>
<div style="left:87px;top:813px;width:450px;height:21px;background:#f8f8f8"></div>
<div style="left:537px;top:813px;width:76px;height:21px;background:#fdf3e4"></div>
<div style="left:613px;top:813px;width:76px;height:21px;background:#fdf3e4"></div>
<div style="left:689px;top:813px;width:76px;height:21px;background:#fde1df"></div>
<div style="left:765px;top:813px;width:76px;height:21px;background:#fdf3e4"></div>
<div style="left:841px;top:813px;width:76px;height:21px;background:#fdf3e4"></div>
<div style="left:917px;top:813px;width:76px;height:21px;background:#fde1df"></div>
<div style="left:993px;top:813px;width:61px;height:21px;background:#f8f8f8"></div>
<div style="left:1054px;top:813px;width:56px;height:21px;background:#f8f8f8"></div>
<div style="left:1110px;top:813px;width:56px;height:21px;background:#f8f8f8"></div>
<div style="left:1166px;top:813px;width:56px;height:21px;background:#f8f8f8"></div>
<div style="left:1222px;top:813px;width:56px;height:21px;background:#f8f8f8"></div>
<div style="left:1278px;top:813px;width:56px;height:21px;background:#f8f8f8"></div>
<div style="left:1334px;top:813px;width:61px;height:21px;background:#e6e6fa"></div>
<div style="left:1395px;top:813px;width:61px;height:21px;background:#e6e6fa"></div>
<div style="left:1456px;top:813px;width:61px;height:21px;background:#e6e6fa"></div>
<div style="left:21px;top:183px;width:1px;height:635px;background:#d9d9d9"></div>
<div style="left:87px;top:183px;width:1px;height:635px;background:#d9d9d9"></div>
<div style="left:537px;top:183px;width:1px;height:635px;background:#d9d9d9"></div>
<div style="left:613px;top:183px;width:1px;height:635px;background:#d9d9d9"></div>
<div style="left:689px;top:183px;width:1px;height:635px;background:#d9d9d9"></div>
<div style="left:765px;top:183px;width:1px;height:635px;background:#d9d9d9"></div>
<div style="left:841px;top:183px;width:1px;height:635px;background:#d9d9d9"></div>
<div style="left:917px;top:183px;width:1px;height:635px;background:#d9d9d9"></div>
<div style="left:993px;top:183px;width:1px;height:635px;background:#d9d9d9"></div>
<div style="left:1054px;top:183px;width:1px;height:635px;background:#d9d9d9"></div>
<div style="left:1110px;top:183px;width:1px;height:635px;background:#d9d9d9"></div>
<div style="left:1166px;top:183px;width:1px;height:635px;background:#d9d9d9"></div>
<div style="left:1222px;top:183px;width:1px;height:635px;background:#d9d9d9"></div>
<div style="left:1278px;top:183px;width:1px;height:635px;background:#d9d9d9"></div>
<div style="left:1334px;top:183px;width:1px;height:635px;background:#d9d9d9"></div>
<div style="left:1395px;top:183px;width:1px;height:635px;background:#d9d9d9"></div>
<div style="left:1456px;top:183px;width:1px;height:635px;background:#d9d9d9"></div>
<div style="left:1px;top:183px;width:1486px;height:1px;background:rgba(90,90,90,0.38)"></div>
<div style="left:1px;top:204px;width:1486px;height:1px;background:rgba(90,90,90,0.38)"></div>
<div style="left:1px;top:225px;width:1486px;height:1px;background:rgba(90,90,90,0.38)"></div>
<div style="left:1px;top:246px;width:1486px;height:1px;background:rgba(90,90,90,0.38)"></div>
<div style="left:1px;top:267px;width:1486px;height:1px;background:rgba(90,90,90,0.38)"></div>
<div style="left:1px;top:288px;width:1486px;height:1px;background:rgba(90,90,90,0.38)"></div>
<div style="left:1px;top:309px;width:1486px;height:1px;background:rgba(90,90,90,0.38)"></div>
<div style="left:1px;top:330px;width:1486px;height:1px;background:rgba(90,90,90,0.38)"></div>
<div style="left:1px;top:351px;width:1486px;height:1px;background:rgba(90,90,90,0.38)"></div>
<div style="left:1px;top:372px;width:1486px;height:1px;background:rgba(90,90,90,0.38)"></div>
<div style="left:1px;top:393px;width:1486px;height:1px;background:rgba(90,90,90,0.38)"></div>
<div style="left:1px;top:414px;width:1486px;height:1px;background:rgba(90,90,90,0.38)"></div>
<div style="left:1px;top:435px;width:1486px;height:1px;background:rgba(90,90,90,0.38)"></div>
<div style="left:1px;top:456px;width:1486px;height:1px;background:rgba(90,90,90,0.38)"></div>
<div style="left:1px;top:477px;width:1486px;height:1px;background:rgba(90,90,90,0.38)"></div>
<div style="left:1px;top:498px;width:1486px;height:1px;background:rgba(90,90,90,0.38)"></div>
<div style="left:1px;top:519px;width:1486px;height:1px;background:rgba(90,90,90,0.38)"></div>
<div style="left:1px;top:540px;width:1486px;height:1px;background:rgba(90,90,90,0.38)"></div>
<div style="left:1px;top:561px;width:1486px;height:1px;background:rgba(90,90,90,0.38)"></div>
<div style="left:1px;top:582px;width:1486px;height:1px;background:rgba(90,90,90,0.38)"></div>
<div style="left:1px;top:603px;width:1486px;height:1px;background:rgba(90,90,90,0.38)"></div>
<div style="left:1px;top:624px;width:1486px;height:1px;background:rgba(90,90,90,0.38)"></div>
<div style="left:1px;top:645px;width:1486px;height:1px;background:rgba(90,90,90,0.38)"></div>
<div style="left:1px;top:666px;width:1486px;height:1px;background:rgba(90,90,90,0.38)"></div>
<div style="left:1px;top:687px;width:1486px;height:1px;background:rgba(90,90,90,0.38)"></div>
<div style="left:1px;top:708px;width:1486px;height:1px;background:rgba(90,90,90,0.38)"></div>
<div style="left:1px;top:729px;width:1486px;height:1px;background:rgba(90,90,90,0.38)"></div>
<div style="left:1px;top:750px;width:1486px;height:1px;background:rgba(90,90,90,0.38)"></div>
<div style="left:1px;top:771px;width:1486px;height:1px;background:rgba(90,90,90,0.38)"></div>
<div style="left:1px;top:792px;width:1486px;height:1px;background:rgba(90,90,90,0.38)"></div>
<div style="left:1px;top:813px;width:1486px;height:1px;background:rgba(90,90,90,0.38)"></div>
<div style="left:1px;top:834px;width:1486px;height:1px;background:rgba(90,90,90,0.38)"></div>
<div style="left:21px;top:183px;width:1466px;height:1px;background:rgba(90,101,115,0.7)"></div>
<div style="left:21px;top:184px;width:1466px;height:1px;background:#5a6573"></div>
<div style="left:21px;top:204px;width:1466px;height:1px;background:#5a6573"></div>
<div style="left:21px;top:185px;width:1466px;height:1px;background:rgba(235,240,240,0.75)"></div>
<div style="left:21px;top:205px;width:1466px;height:1px;background:rgba(235,240,240,0.75)"></div>
<svg style="position:absolute;left:0;top:183px" width="21" height="20" viewBox="0 0 21 20"><defs><linearGradient id="bg0" x1="0" y1="0" x2="0" y2="1"><stop offset="0" stop-color="#f7f9fe"/><stop offset="1" stop-color="#d3def4"/></linearGradient></defs><path d="M8 5.5 H14 Q16.5 5.5 16.5 8 V9.8 Q16.5 12.5 14 12.5 H12.3 L9.3 15.3 L9.9 12.5 H8 Q5.5 12.5 5.5 9.8 V8 Q5.5 5.5 8 5.5 Z" fill="url(#bg0)" stroke="#5a6b82" stroke-width="1"/></svg>
<svg style="position:absolute;left:0;top:246px" width="21" height="21" viewBox="0 0 21 21"><defs><linearGradient id="mg" x1="0" y1="0" x2="0" y2="1"><stop offset="0" stop-color="#ffffff"/><stop offset="0.45" stop-color="#e3f2fb"/><stop offset="1" stop-color="#92cdee"/></linearGradient></defs><rect x="5.5" y="5.5" width="11" height="11" rx="1.5" fill="url(#mg)" stroke="#2c6b98" stroke-width="1"/><rect x="7" y="10" width="8" height="2" fill="#c8231e"/></svg>
<svg style="position:absolute;left:0;top:414px" width="21" height="20" viewBox="0 0 21 20"><defs><linearGradient id="bg11" x1="0" y1="0" x2="0" y2="1"><stop offset="0" stop-color="#f7f9fe"/><stop offset="1" stop-color="#d3def4"/></linearGradient></defs><path d="M8 5.5 H14 Q16.5 5.5 16.5 8 V9.8 Q16.5 12.5 14 12.5 H12.3 L9.3 15.3 L9.9 12.5 H8 Q5.5 12.5 5.5 9.8 V8 Q5.5 5.5 8 5.5 Z" fill="url(#bg11)" stroke="#5a6b82" stroke-width="1"/></svg>
<svg style="position:absolute;left:0;top:582px" width="21" height="20" viewBox="0 0 21 20"><defs><linearGradient id="bg19" x1="0" y1="0" x2="0" y2="1"><stop offset="0" stop-color="#f7f9fe"/><stop offset="1" stop-color="#d3def4"/></linearGradient></defs><path d="M8 5.5 H14 Q16.5 5.5 16.5 8 V9.8 Q16.5 12.5 14 12.5 H12.3 L9.3 15.3 L9.9 12.5 H8 Q5.5 12.5 5.5 9.8 V8 Q5.5 5.5 8 5.5 Z" fill="url(#bg19)" stroke="#5a6b82" stroke-width="1"/></svg>
<svg style="position:absolute;left:0;top:624px" width="21" height="20" viewBox="0 0 21 20"><defs><linearGradient id="bg21" x1="0" y1="0" x2="0" y2="1"><stop offset="0" stop-color="#f7f9fe"/><stop offset="1" stop-color="#d3def4"/></linearGradient></defs><path d="M8 5.5 H14 Q16.5 5.5 16.5 8 V9.8 Q16.5 12.5 14 12.5 H12.3 L9.3 15.3 L9.9 12.5 H8 Q5.5 12.5 5.5 9.8 V8 Q5.5 5.5 8 5.5 Z" fill="url(#bg21)" stroke="#5a6b82" stroke-width="1"/></svg>
<svg style="position:absolute;left:0;top:645px" width="21" height="20" viewBox="0 0 21 20"><defs><linearGradient id="bg22" x1="0" y1="0" x2="0" y2="1"><stop offset="0" stop-color="#f7f9fe"/><stop offset="1" stop-color="#d3def4"/></linearGradient></defs><path d="M8 5.5 H14 Q16.5 5.5 16.5 8 V9.8 Q16.5 12.5 14 12.5 H12.3 L9.3 15.3 L9.9 12.5 H8 Q5.5 12.5 5.5 9.8 V8 Q5.5 5.5 8 5.5 Z" fill="url(#bg22)" stroke="#5a6b82" stroke-width="1"/></svg>
<div style="left:23px;top:185px;width:63px;height:18px;border:1px dotted #6a6440"></div>
<svg style="position:absolute;left:0;top:0" width="1487" height="818" viewBox="0 0 1487 818"><text x="752.5" y="647" transform="rotate(-43 752.5 647)" font-family="Liberation Sans" font-weight="bold" font-size="75" letter-spacing="1" fill="rgb(110,110,110)" fill-opacity="0.18">Mars 2026</text><path d="M551.5 582.8 C557.5 582.6 577.9 581.5 587.8 581.4 C597.7 581.3 605.5 581.5 610.7 582.4 C615.9 583.3 617.3 584.5 618.8 586.8 C620.3 589.1 620.2 594.0 619.8 596.2 C619.3 598.4 619.9 599.1 616.1 599.9 C612.3 600.7 604.8 600.6 597.2 601.2 C589.6 601.8 577.5 602.9 570.3 603.6 C563.1 604.3 558.5 605.5 554.2 605.2 C550.0 604.9 546.7 603.4 544.8 601.6 C542.9 599.8 542.8 596.8 542.8 594.2 C542.8 591.6 543.3 588.0 544.8 586.1 C546.2 584.2 546.5 583.4 551.5 582.8 C556.5 582.1 571.1 582.3 575.0 582.2" fill="none" stroke="#1414cf" stroke-width="2.6" stroke-linecap="round" stroke-linejoin="round"/><path d="M570.3 603.6 C567.6 603.9 557.1 604.4 554.2 605.2 C551.3 606.0 553.5 606.3 552.9 608.3 C552.3 610.3 550.7 614.1 550.8 617.1 C550.9 620.1 551.4 624.1 553.5 626.5 C555.6 628.9 557.4 630.3 563.6 631.2 C569.8 632.1 582.6 632.0 590.5 632.1 C598.4 632.2 606.3 632.5 610.7 631.6 C615.1 630.7 615.8 629.4 617.1 626.5 C618.5 623.6 619.1 617.9 618.8 614.4 C618.5 610.9 617.2 607.6 615.4 605.6 C613.6 603.6 612.1 602.6 608.0 602.3 C603.9 602.0 596.3 603.1 590.5 603.6 C584.7 604.1 578.1 604.6 573.0 605.2 C567.9 605.8 562.2 606.7 560.0 607.0" fill="none" stroke="#1414cf" stroke-width="2.6" stroke-linecap="round" stroke-linejoin="round"/><path d="M593.2 642.0 C591.6 641.0 586.9 637.5 583.8 635.9 C580.7 634.2 578.4 632.5 574.4 632.1 C570.4 631.7 563.3 631.9 559.6 633.2 C555.9 634.5 553.6 637.0 552.2 639.9 C550.9 642.8 550.7 647.5 551.5 650.7 C552.3 654.0 553.8 657.5 556.9 659.4 C560.0 661.3 563.6 661.4 570.3 662.1 C577.0 662.8 590.0 663.0 597.2 663.5 C604.4 664.0 609.7 665.1 613.4 664.8 C617.1 664.4 618.3 663.8 619.4 661.4 C620.5 659.0 620.6 654.1 620.1 650.7 C619.6 647.4 618.1 644.0 616.1 641.3 C614.1 638.6 611.8 636.6 608.0 634.6 C604.2 632.6 597.7 629.9 593.2 629.2 C588.7 628.5 584.6 630.0 581.1 630.5 C577.6 631.0 573.5 631.8 572.0 632.0" fill="none" stroke="#1414cf" stroke-width="2.6" stroke-linecap="round" stroke-linejoin="round"/></svg>
</body></html>
